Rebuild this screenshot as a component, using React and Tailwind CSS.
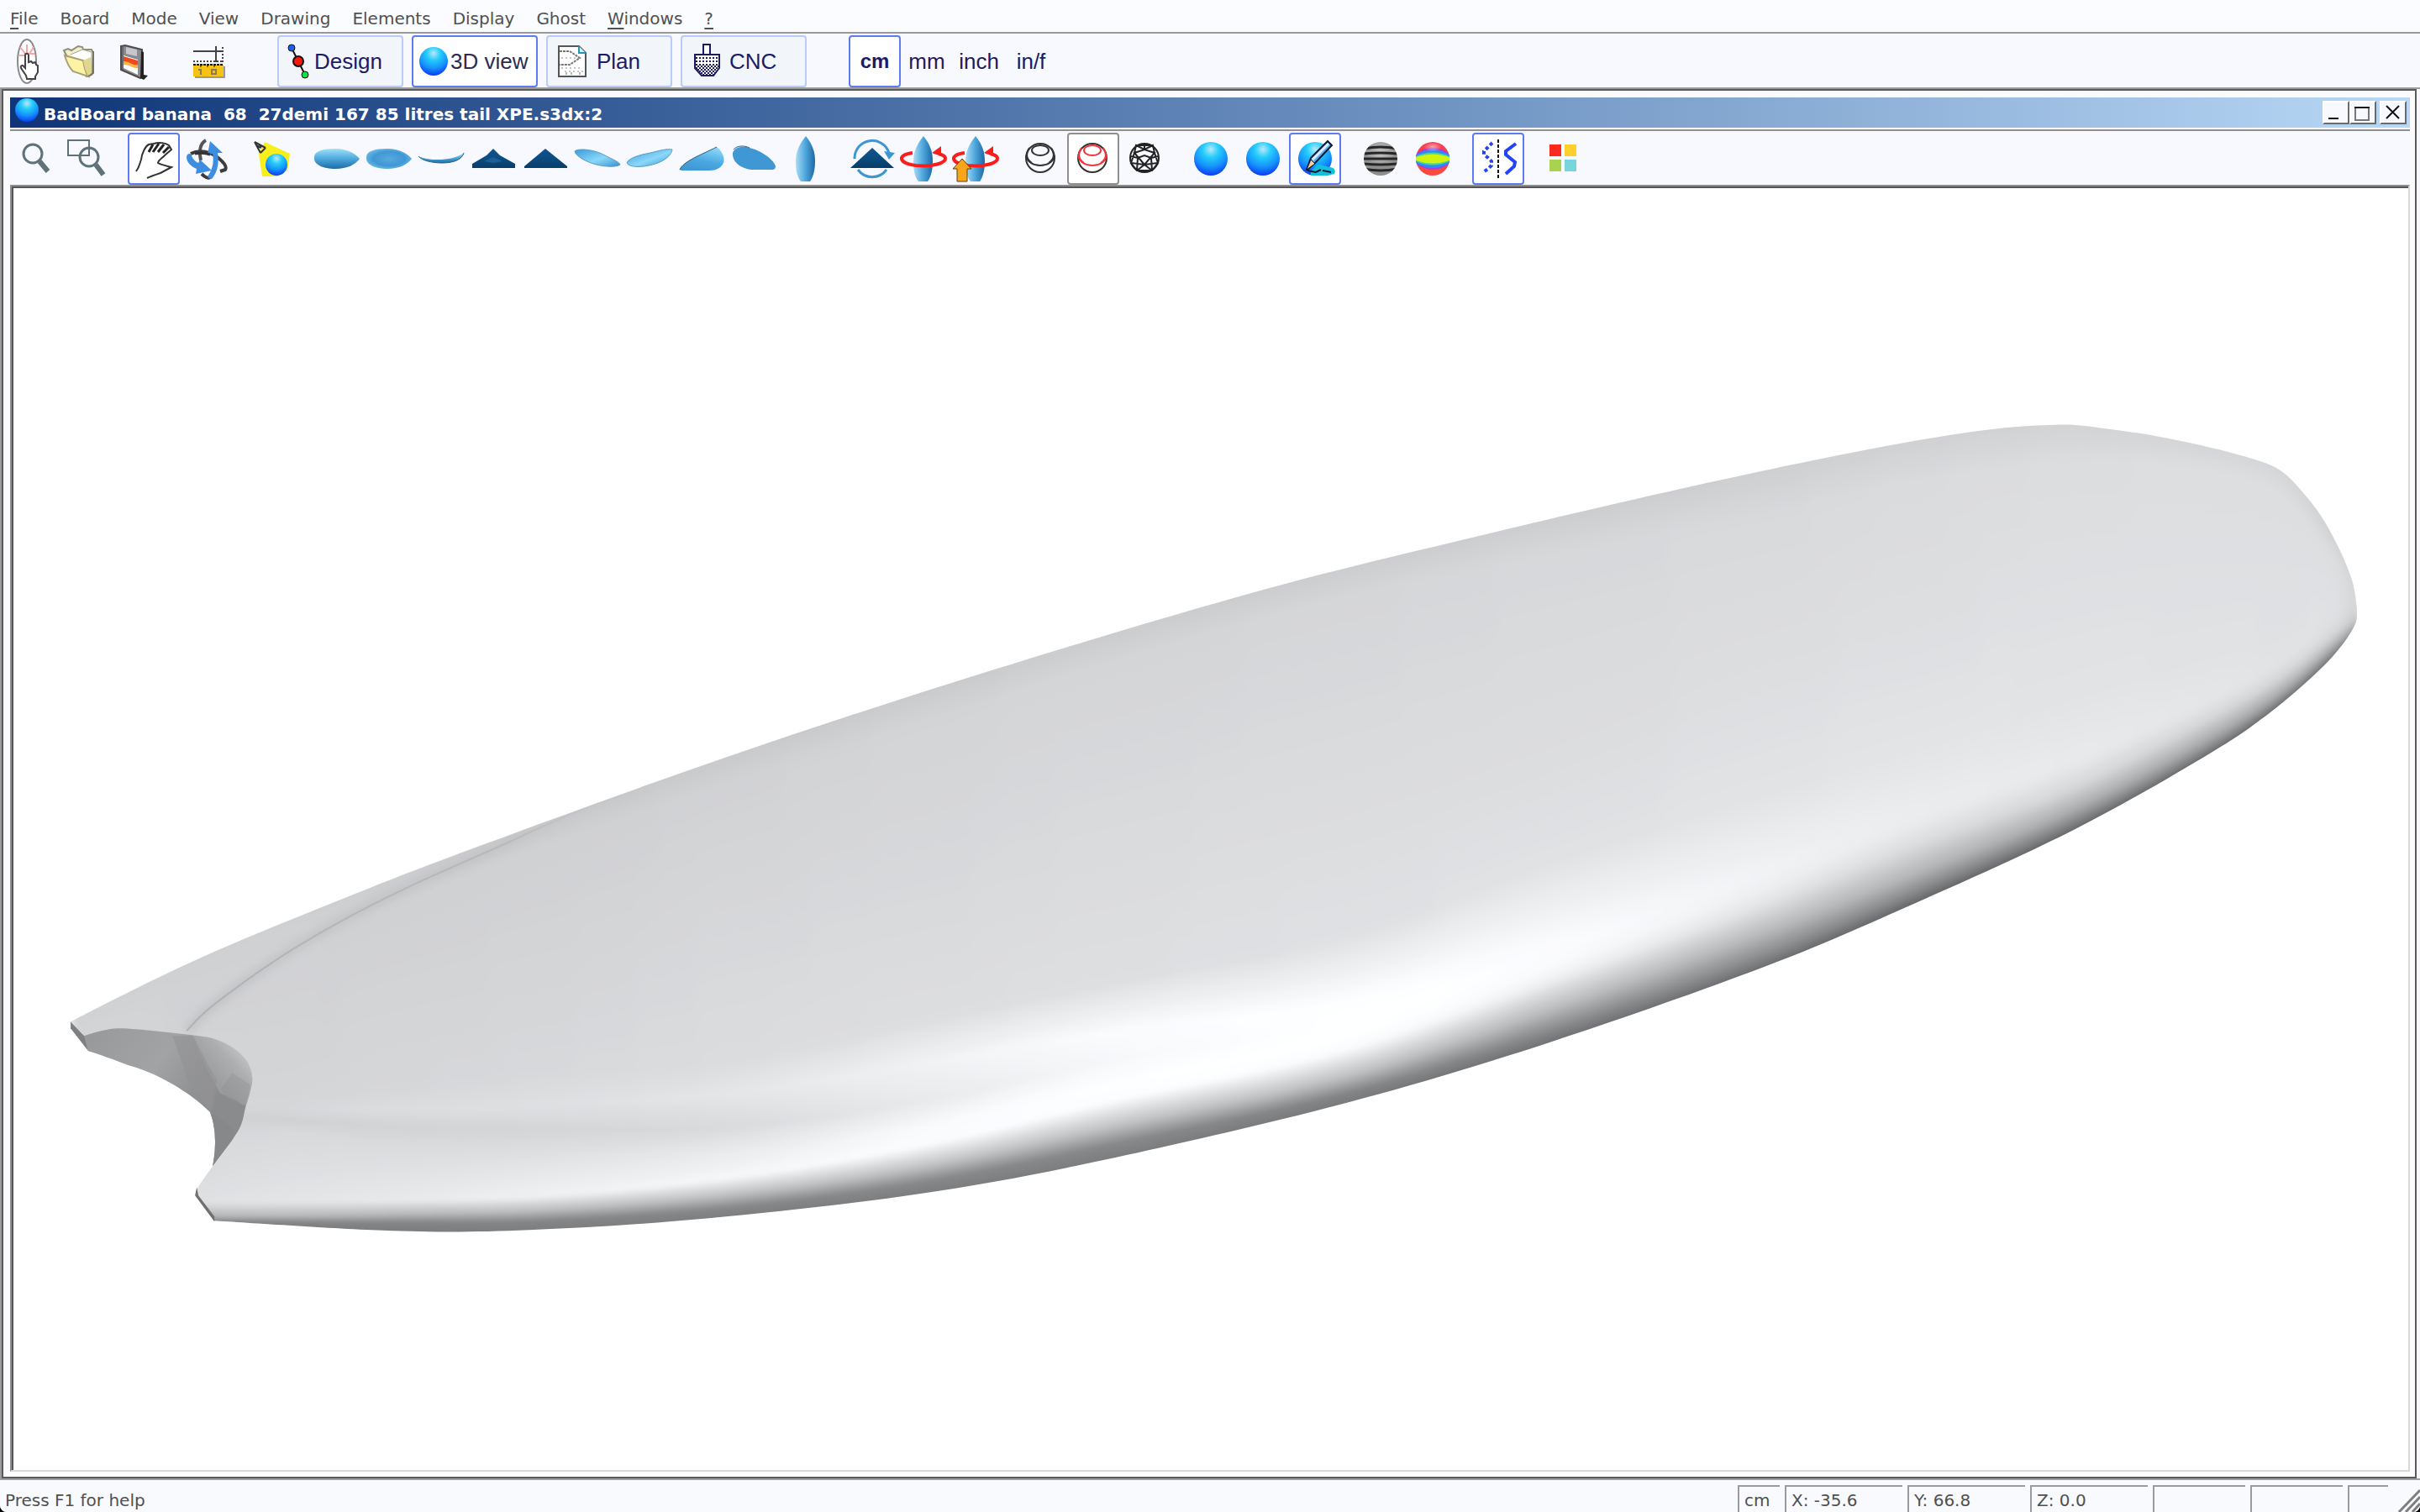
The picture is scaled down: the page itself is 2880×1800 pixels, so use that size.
import { useState } from "react";

const MENUS = [
  { label: "File", hot: true },
  { label: "Board" },
  { label: "Mode" },
  { label: "View" },
  { label: "Drawing" },
  { label: "Elements" },
  { label: "Display" },
  { label: "Ghost" },
  { label: "Windows", hot: true },
  { label: "?", hot: true },
];

const UNITS = ["cm", "mm", "inch", "in/f"];

/* ---------- small drawing helpers ---------- */

// Catmull-Rom through the points, returned as bezier commands
function smooth(pts) {
  let d = "";
  for (let i = 0; i < pts.length - 1; i++) {
    const p0 = pts[i - 1] || pts[i];
    const p1 = pts[i];
    const p2 = pts[i + 1];
    const p3 = pts[i + 2] || p2;
    d += `C${p1[0] + (p2[0] - p0[0]) / 6} ${p1[1] + (p2[1] - p0[1]) / 6} ${p2[0] - (p3[0] - p1[0]) / 6} ${p2[1] - (p3[1] - p1[1]) / 6} ${p2[0]} ${p2[1]}`;
  }
  return d;
}

function Defs() {
  return (
    <svg className="absolute w-0 h-0" aria-hidden="true">
      <defs>
        <radialGradient id="ball" cx="0.5" cy="0.22" r="0.8">
          <stop offset="0" stopColor="#b8e8fa" />
          <stop offset="0.3" stopColor="#25cdfb" />
          <stop offset="0.65" stopColor="#1592fb" />
          <stop offset="1" stopColor="#0a35f5" />
        </radialGradient>
        <linearGradient id="sky" x1="0" y1="0" x2="0" y2="1">
          <stop offset="0" stopColor="#9fe0fb" />
          <stop offset="0.5" stopColor="#4ea9dc" />
          <stop offset="1" stopColor="#1d6aa5" />
        </linearGradient>
        <linearGradient id="skyLight" x1="0" y1="0" x2="1" y2="1">
          <stop offset="0" stopColor="#3a9ad8" />
          <stop offset="0.55" stopColor="#8ad8fa" />
          <stop offset="1" stopColor="#3a90cc" />
        </linearGradient>
        <linearGradient id="wing" x1="0.8" y1="0" x2="0.4" y2="1">
          <stop offset="0" stopColor="#8fdcfb" />
          <stop offset="0.6" stopColor="#4aa8e0" />
          <stop offset="1" stopColor="#3f97d4" />
        </linearGradient>
        <radialGradient id="flat">
          <stop offset="0" stopColor="#58aae0" />
          <stop offset="0.7" stopColor="#3f97d4" />
          <stop offset="1" stopColor="#62b3e2" />
        </radialGradient>
        <linearGradient id="boardV">
          <stop offset="0" stopColor="#a9dcf7" />
          <stop offset="0.5" stopColor="#4ea6dc" />
          <stop offset="1" stopColor="#1c68a4" />
        </linearGradient>
        <linearGradient id="deep" x1="0" y1="0" x2="0" y2="1">
          <stop offset="0" stopColor="#10558d" />
          <stop offset="0.5" stopColor="#0c4c80" />
          <stop offset="1" stopColor="#083c68" />
        </linearGradient>
        <radialGradient id="shine" cx="0.5" cy="0.4" r="0.5">
          <stop offset="0" stopColor="#fff" stopOpacity="0.5" />
          <stop offset="1" stopColor="#fff" stopOpacity="0" />
        </radialGradient>
        <linearGradient id="rainbow" x1="0" y1="0" x2="0" y2="1">
          <stop offset="0" stopColor="#f53b52" />
          <stop offset="1" stopColor="#fb4a3e" />
        </linearGradient>
        <pattern id="dots" width="4" height="4" patternUnits="userSpaceOnUse">
          <rect width="2" height="2" fill="#1c1c5e" />
        </pattern>
        <pattern id="checks" width="4" height="4" patternUnits="userSpaceOnUse">
          <rect width="2" height="2" fill="#1c1c5e" />
          <rect x="2" y="2" width="2" height="2" fill="#1c1c5e" />
        </pattern>
        <clipPath id="ballClip">
          <circle cx="31" cy="31" r="20" />
        </clipPath>
      </defs>
    </svg>
  );
}

function Icon({ children }) {
  return (
    <svg viewBox="0 0 62 62" className="w-[62px] h-[62px] shrink-0" fill="none" aria-hidden="true">
      {children}
    </svg>
  );
}

/* ---------- main toolbar icons ---------- */

const NewIcon = () => (
  <Icon>
    <ellipse cx="30" cy="31" rx="11" ry="26" fill="#fff" stroke="#8b8b8b" strokeWidth="2" />
    <path d="M22 14l6 8M30 11v10M38 14l-5 8M21 24h6M39 22h-5" stroke="#f5a6a6" strokeWidth="2" />
    <path d="M28 24c0-3 4-3 4 0v8l3-1 2 2 3-1 1 3 2 1v8l-3 5v3H30l-1-4-6-9c-1-3 2-4 3-2l2 2z" fill="#fff" stroke="#444" strokeWidth="2" />
  </Icon>
);

const OpenIcon = () => (
  <Icon>
    <path d="M15 24l-3-6 5-2 4 2 8-5 5 1 1 3 10 0 2 4-2 26-6 2z" fill="#f3eecb" stroke="#8f8e7c" strokeWidth="2" />
    <path d="M20 23l14-6 11 3v22" fill="#fff" stroke="#a3a290" strokeWidth="1" />
    <path d="M13 24l22 6c1 7 3 14 6 19l-18-6c-5-5-8-12-10-19z" fill="#fdf3a4" stroke="#a8a174" strokeWidth="2" />
    <path d="M35 30l9-4 1 19-4 4c-3-6-5-12-6-19z" fill="#e0d68c" />
    <path d="M41 49l6-4V19" stroke="#77755f" strokeWidth="2" />
  </Icon>
);

const SaveIcon = () => (
  <Icon>
    <path d="M18 13l5-1 20 5 1 30-3 4-23-10z" fill="#8a8a8e" stroke="#4c4c4e" strokeWidth="2" />
    <path d="M42 19l3 1v27l5 1-5 5-4-2z" fill="#222" />
    <path d="M24 14l13 3v8l-13-3z" fill="#c6c6cc" />
    <path d="M21 24l17 5v18l-17-8z" fill="#fff" />
    <path d="M21 25l17 5v7c-6 2-10-5-17-4z" fill="#ee4a1a" />
    <path d="M21 31c7-1 11 6 17 4v4c-6 1-10-5-17-4z" fill="#ffb347" />
    <path d="M20 14v27" stroke="#4c4c4e" strokeWidth="1" />
  </Icon>
);

const RulerIcon = () => (
  <Icon>
    <path d="M12 19h36M39 13v19" stroke="#444" strokeWidth="2" />
    <path d="M12 31h36M47 14v18" stroke="#444" strokeWidth="2" strokeDasharray="2 2" />
    <rect x="14" y="37" width="36" height="14" fill="#9a9a9a" />
    <rect x="12" y="35" width="36" height="14" fill="#f6c315" />
    <path d="M12 35h36" stroke="#111" strokeWidth="2" strokeDasharray="3 1" />
    <path d="M18 41h3v6M34 41h5v5h-5z" stroke="#8b7b52" strokeWidth="2" />
    <path d="M21 35v3M29 35v3M37 35v3" stroke="#111" strokeWidth="1" />
  </Icon>
);

const DesignIcon = () => (
  <svg viewBox="0 0 42 58" className="w-[42px] h-[58px]" aria-hidden="true">
    <path d="M15 13l8 16 8 16" stroke="#111" strokeWidth="2" fill="none" />
    <circle cx="15" cy="13" r="4" fill="#1d5ff0" stroke="#111" strokeWidth="1" />
    <circle cx="23" cy="29" r="6" fill="#f51b0c" stroke="#111" strokeWidth="2" />
    <circle cx="31" cy="45" r="4" fill="#14e046" stroke="#111" strokeWidth="1" />
  </svg>
);

const View3dIcon = () => (
  <svg viewBox="0 0 44 58" className="w-11 h-[58px]" aria-hidden="true">
    <circle cx="24" cy="29" r="17" fill="url(#ball)" />
  </svg>
);

const PlanIcon = () => (
  <svg viewBox="0 0 58 58" className="w-[58px] h-[58px]" fill="none" aria-hidden="true">
    <path d="M13 11h24l8 8v28H13z" fill="#fff" stroke="#555" strokeWidth="2" />
    <path d="M37 11v8h8" fill="#d5f6fc" stroke="#2595b5" strokeWidth="2" />
    <path d="M14 17h12l12 8-12 8H14" stroke="#777" strokeWidth="2" strokeDasharray="3 1" />
    <path d="M16 25h22M16 37h24M20 41h22" stroke="#888" strokeWidth="1" strokeDasharray="2 3" />
    <path d="M22 42v3M28 42v3M38 42v3" stroke="#777" strokeWidth="1" />
  </svg>
);

const CncIcon = () => (
  <svg viewBox="0 0 56 58" className="w-14 h-[58px]" fill="none" aria-hidden="true">
    <path d="M25 20V9h8v11" fill="#fff" stroke="#1c1c5e" strokeWidth="2" />
    <path d="M15 21h29v16l-7 9H23l-8-9z" fill="#fff" />
    <path d="M15 21h29v13H15z" fill="url(#dots)" />
    <path d="M15 34h29v4l-7 8H23l-8-8z" fill="url(#checks)" />
    <path d="M15 21h29v16l-7 9H23l-8-9z" stroke="#1c1c5e" strokeWidth="2" />
  </svg>
);

/* ---------- 3D view toolbar icons ---------- */

const MagnifyIcon = () => (
  <Icon>
    <circle cx="27" cy="25" r="11" stroke="#5e7278" strokeWidth="3" />
    <path d="M35 34l10 12" stroke="#5e7278" strokeWidth="6" />
  </Icon>
);

const ZoomBoxIcon = () => (
  <Icon>
    <rect x="7" y="9" width="25" height="18" stroke="#5e7278" strokeWidth="2" />
    <circle cx="32" cy="29" r="11" stroke="#5e7278" strokeWidth="3" />
    <path d="M40 38l9 12" stroke="#5e7278" strokeWidth="6" />
  </Icon>
);

const HandIcon = () => (
  <Icon>
    <path
      d="M10 46c4-5 4-9 6-14 1-8 5-16 9-18l6-1c6-2 14-1 18 2l3 5-8 7c-4 4-8 6-8 9 3 2 8 3 16 5l-13 7c-6 2-12 4-16 6"
      stroke="#333"
      strokeWidth="2"
    />
    <path d="M30 14l-5 9M37 13l-7 10M43 14l-7 9M49 17l-7 7" stroke="#222" strokeWidth="3" />
  </Icon>
);

const OrbitIcon = () => (
  <Icon>
    <path d="M31 9c-8 4-8 16-6 24" stroke="#555" strokeWidth="4" />
    <path d="M13 25c10-5 24-3 34 6 7 6 9 10 7 13l-6 2" stroke="#3c3c3c" strokeWidth="4" />
    <path d="M26 49c4 4 8 6 10 4" stroke="#3c3c3c" strokeWidth="4" />
    <path d="M8 29c0-4 4-5 6-3 0 4 4 8 8 10l2-4 14 13-19 4 1-6c-7-3-12-8-12-14z" fill="#3f8de0" />
    <path d="M36 10l15 14h-6c2 12 0 23-7 31-3 0-4-1-5-3 6-8 8-18 6-27l-6 1z" fill="#3f8de0" />
    <path d="M18 25c6-1 12-1 18 1" stroke="#333" strokeWidth="3" />
  </Icon>
);

const LightIcon = () => (
  <Icon>
    <path d="M23 11l30 14-3 20-12 7H20l-4-27z" fill="#f8ef1a" />
    <path d="M11 11l7 13M11 11l13 7M13 15l6 3M15 18l5-3M18 24l6-6" stroke="#333" strokeWidth="2" />
    <circle cx="37" cy="38" r="13" fill="url(#ball)" />
  </Icon>
);

const shapes = {
  top: <path d="M4 29c0-7 10-10 25-10 14 0 24 6 29 12-5 7-15 12-29 12S4 38 4 31z" fill="url(#sky)" />,
  bottom: <path d="M4 29c0-7 10-10 25-10 14 0 24 6 29 12-5 7-15 12-29 12S4 38 4 31z" fill="url(#flat)" />,
  profile: (
    <g>
      <path d="M4 28c14 6 40 6 54-4-2 7-10 12-26 12C20 36 8 33 4 28z" fill="url(#sky)" />
      <path d="M4 28c4 5 16 8 28 8 16 0 24-5 26-12" stroke="#2b5a80" strokeWidth="1" />
    </g>
  ),
  front: (
    <g>
      <path d="M6 37l17-10 8-8 8 8 18 10v5H6z" fill="url(#deep)" />
      <path d="M20 34l11-5 11 5-11 2z" fill="#1a5f97" />
    </g>
  ),
  back: <path d="M6 40l25-21 26 21v2H6z" fill="url(#deep)" />,
  tiltL: (
    <path d="M4 22c4-4 24-2 36 5 12 6 18 9 18 11-4 3-16 3-28 0S5 28 4 22z" fill="url(#skyLight)" stroke="#5a9cc4" />
  ),
  tiltR: (
    <path d="M58 20c-1 8-12 16-28 19-14 3-24 1-26-3 2-6 16-10 28-12 12-3 18-5 26-4z" fill="url(#skyLight)" stroke="#5a9cc4" />
  ),
  wing: (
    <g>
      <path d="M5 44c4-10 26-18 44-27 7 5 10 14 8 19-3 6-9 9-16 9H7z" fill="url(#wing)" />
      <path d="M5 44c4-10 26-18 44-27" stroke="#2d5d80" strokeWidth="1" />
    </g>
  ),
  leaf: (
    <g>
      <path d="M6 24c2-7 12-9 20-6 14 3 30 15 31 22 0 3-2 4-4 4H31C18 44 5 36 6 24z" fill="#3f97d4" />
      <path d="M7 20c4-5 13-5 19-2" stroke="#2d5d80" strokeWidth="1" />
    </g>
  ),
  stand: <path d="M31 4c8 10 11 19 11 30 0 12-3 20-6 24H25c-4-5-6-12-6-24 0-11 4-20 12-30z" fill="url(#boardV)" />,
};

const SpinFrontIcon = () => (
  <Icon>
    <path d="M11 31a21 21 0 0 1 41-7" stroke="#3d96d2" strokeWidth="3" />
    <path d="M46 22l13 2-7 8z" fill="#3d96d2" />
    <path d="M15 44a21 21 0 0 0 34 0" stroke="#3d96d2" strokeWidth="3" />
    <path d="M6 42l26-24 26 24z" fill="url(#deep)" />
  </Icon>
);

function SpinIcon({ arrow }) {
  return (
    <Icon>
      {shapes.stand}
      <path d="M18 24C0 26 0 36 22 39c20 2 36-3 35-9-1-3-4-4-8-5" stroke="#fb1d1a" strokeWidth="4" />
      <path d="M41 24l11-8v12z" fill="#fb1d1a" />
      {arrow && <path d="M15 31l11 12h-5v15H9V43H4z" fill="#f9a51b" stroke="#5b4110" strokeWidth="1" />}
    </Icon>
  );
}

function RingsIcon({ color }) {
  return (
    <Icon>
      <circle cx="30" cy="30" r="17" stroke="#333" strokeWidth="2" />
      <ellipse cx="30" cy="21" rx="10" ry="6" stroke={color} strokeWidth="2" />
      <path d="M13 27c2 16 32 16 34 0M17 18c-5 8-3 14 3 18M43 18c5 8 3 14-3 18" stroke={color} strokeWidth="2" />
    </Icon>
  );
}

const MeshIcon = () => (
  <Icon>
    <circle cx="30" cy="30" r="17" stroke="#222" strokeWidth="2" />
    <path
      d="M30 38L18 24l12-4 12 4zM18 24l-4 12 16 2 16-2-4-12M30 38l-9 7M30 38l9 7M18 24l2-9 10 5 10-5 2 9M20 15h20M14 36l7 9h18l7-9M13 28l9 2 8-3 8 3 9-2M22 30l-1 15M38 30l1 15M30 20v-7"
      stroke="#222"
      strokeWidth="2"
    />
  </Icon>
);

const BallIcon = () => (
  <Icon>
    <circle cx="31" cy="31" r="20" fill="url(#ball)" />
  </Icon>
);

const PaintIcon = () => (
  <Icon>
    <circle cx="31" cy="31" r="20" fill="url(#ball)" />
    <path d="M26 46l8-8c6 0 10 2 14 3 6 0 8 4 6 8l-8 2H26z" fill="#12bfdc" />
    <path d="M21 44l5-14 20-20 5 5-20 21-9 8z" fill="#5db2f2" stroke="#0d1833" strokeWidth="2" />
    <path d="M27 31L46 12l2 2-19 19z" fill="#d9f0ff" />
    <path d="M21 44l5-12 5 5z" fill="#fbcf9c" stroke="#0d1833" strokeWidth="1" />
    <path d="M22 45l10 2 6-3M40 45l10 2" stroke="#0d1833" strokeWidth="2" />
  </Icon>
);

const ZebraIcon = () => (
  <Icon>
    <g clipPath="url(#ballClip)">
      <rect x="11" y="11" width="40" height="40" fill="#8f8f8f" />
      <circle cx="31" cy="27" r="18" fill="url(#shine)" />
      <path d="M11 19q20-4 40 0M11 25q20-2 40 0M11 31h40M11 37q20 2 40 0M11 43q20 4 40 0" stroke="#262626" strokeWidth="3" />
    </g>
  </Icon>
);

const RainbowIcon = () => (
  <Icon>
    <g clipPath="url(#ballClip)">
      <rect x="11" y="11" width="40" height="40" fill="url(#rainbow)" />
      <path d="M11 25q20-14 40 0v12q-20 14-40 0z" fill="#a43ce0" />
      <path d="M11 26q20-12 40 0v10q-20 12-40 0z" fill="#2f8af2" />
      <path d="M11 28q20-9 40 0v6q-20 9-40 0z" fill="#46d69a" />
      <path d="M11 29q20-7 40 0v4q-20 7-40 0z" fill="#d2f30e" />
    </g>
    <ellipse cx="31" cy="18" rx="11" ry="6" fill="url(#shine)" />
  </Icon>
);

const SymmetryIcon = () => (
  <Icon>
    <path d="M24 12l-5 5-5 5v4l5 4 4 4v5l-4 4-6 4" stroke="#2343f5" strokeWidth="4" strokeDasharray="4 3" />
    <path d="M31 8v46" stroke="#111" strokeWidth="2" strokeDasharray="4 2" />
    <path d="M52 13l-12 9v4l11 9-1 5-10 9" stroke="#2343f5" strokeWidth="4" />
  </Icon>
);

const ColorsIcon = () => (
  <Icon>
    <rect x="14" y="14" width="14" height="14" fill="#fb2a1d" />
    <rect x="32" y="14" width="14" height="14" fill="#ffcf2c" />
    <rect x="14" y="32" width="14" height="14" fill="#a9d24e" />
    <rect x="32" y="32" width="14" height="14" fill="#76d6dc" />
  </Icon>
);

const VIEW_TOOLS = [
  [
    { name: "Zoom", icon: <MagnifyIcon /> },
    { name: "Zoom window", icon: <ZoomBoxIcon /> },
  ],
  [
    { name: "Pan", icon: <HandIcon />, frame: "blue" },
    { name: "Rotate", icon: <OrbitIcon /> },
  ],
  [{ name: "Light", icon: <LightIcon /> }],
  [
    { name: "Top view", icon: <Icon>{shapes.top}</Icon> },
    { name: "Bottom view", icon: <Icon>{shapes.bottom}</Icon> },
    { name: "Side view", icon: <Icon>{shapes.profile}</Icon> },
    { name: "Front view", icon: <Icon>{shapes.front}</Icon> },
    { name: "Back view", icon: <Icon>{shapes.back}</Icon> },
    { name: "Tilt left", icon: <Icon>{shapes.tiltL}</Icon> },
    { name: "Tilt right", icon: <Icon>{shapes.tiltR}</Icon> },
    { name: "Tail perspective", icon: <Icon>{shapes.wing}</Icon> },
    { name: "Nose perspective", icon: <Icon>{shapes.leaf}</Icon> },
    { name: "Upright", icon: <Icon>{shapes.stand}</Icon> },
  ],
  [
    { name: "Spin front", icon: <SpinFrontIcon /> },
    { name: "Spin", icon: <SpinIcon /> },
    { name: "Spin and lift", icon: <SpinIcon arrow /> },
  ],
  [
    { name: "Slices", icon: <RingsIcon color="#333" /> },
    { name: "Colored slices", icon: <RingsIcon color="#f5333a" />, frame: "gray" },
    { name: "Mesh", icon: <MeshIcon /> },
  ],
  [
    { name: "Smooth", icon: <BallIcon /> },
    { name: "Shaded", icon: <BallIcon /> },
    { name: "Painted", icon: <PaintIcon />, frame: "blue" },
  ],
  [
    { name: "Zebra", icon: <ZebraIcon /> },
    { name: "Curvature", icon: <RainbowIcon /> },
  ],
  [{ name: "Symmetry", icon: <SymmetryIcon />, frame: "blue" }],
  [{ name: "Colors", icon: <ColorsIcon /> }],
];

/* ---------- the board ---------- */

const TOP_EDGE = [
  [84, 1215], [153, 1180], [257, 1131], [400, 1072], [557, 1011], [865, 900], [1180, 797], [1500, 702], [1760, 637],
  [2013, 578], [2218, 535], [2355, 512], [2445, 505], [2500, 509], [2567, 519], [2633, 533], [2687, 548], [2713, 560],
  [2733, 579], [2760, 613], [2783, 655], [2798, 693], [2803, 723],
];
const BOTTOM_EDGE = [
  [2803, 723], [2801, 742], [2783, 770], [2753, 802], [2700, 847], [2628, 896], [2466, 987], [2269, 1078], [2098, 1150],
  [1842, 1240], [1600, 1312], [1316, 1379], [1093, 1420], [843, 1449], [629, 1463], [468, 1464], [255, 1452],
];
const TAIL_EDGE = [
  [233, 1420], [237, 1410], [253, 1387], [277, 1355], [287, 1337], [292, 1317], [298, 1297], [300, 1280], [293, 1261],
  [277, 1246], [253, 1235], [220, 1230], [183, 1226], [143, 1223], [120, 1226], [100, 1232],
];

const OUTLINE = `M84 1215${smooth(TOP_EDGE)}${smooth(BOTTOM_EDGE)}L233 1420${smooth(TAIL_EDGE)}Z`;

// Grey profile from rail to rail at a few stations: x, then y and grey pairs
const STATIONS = [
  [84, [1200, 207], [1220, 210], [1240, 212], [1260, 212], [1290, 212], [1310, 212], [1400, 212], [1430, 220], [1444, 180], [1449, 135], [1453, 124]],
  [300, [1113, 207], [1145, 209], [1270, 211], [1300, 212], [1316, 213], [1330, 208], [1345, 215], [1430, 226], [1447, 180], [1453, 132], [1459, 124]],
  [470, [1045, 205], [1080, 208], [1230, 212], [1295, 214], [1320, 220], [1340, 210], [1362, 218], [1428, 232], [1445, 180], [1454, 132], [1464, 124]],
  [645, [980, 202], [1010, 208], [1200, 213], [1280, 216], [1315, 223], [1344, 212], [1370, 222], [1422, 240], [1440, 185], [1452, 132], [1464, 124]],
  [870, [898, 201], [930, 209], [1150, 216], [1260, 219], [1300, 229], [1340, 218], [1370, 234], [1400, 246], [1420, 192], [1436, 134], [1448, 124]],
  [1093, [825, 202], [860, 211], [1100, 217], [1215, 221], [1265, 241], [1310, 232], [1340, 248], [1362, 251], [1388, 192], [1406, 135], [1420, 124]],
  [1316, [755, 203], [790, 212], [1050, 219], [1170, 222], [1228, 250], [1262, 246], [1290, 253], [1310, 252], [1341, 192], [1362, 135], [1379, 124]],
  [1600, [672, 203], [710, 213], [980, 220], [1115, 224], [1190, 253], [1212, 254], [1232, 254], [1248, 250], [1280, 190], [1300, 132], [1312, 120]],
  [1842, [616, 204], [660, 215], [900, 220], [1028, 225], [1112, 248], [1130, 251], [1150, 249], [1165, 240], [1200, 188], [1226, 135], [1240, 112]],
  [2098, [560, 206], [610, 216], [800, 221], [945, 226], [1030, 241], [1042, 241], [1056, 238], [1076, 225], [1108, 185], [1135, 138], [1151, 106]],
  [2269, [525, 208], [575, 218], [760, 222], [895, 227], [963, 235], [975, 235], [985, 232], [1007, 220], [1042, 180], [1064, 135], [1078, 100]],
  [2466, [505, 210], [550, 220], [700, 223], [830, 226], [895, 232], [903, 232], [912, 229], [935, 215], [962, 172], [978, 128], [988, 98]],
  [2628, [532, 212], [560, 221], [680, 223], [780, 225], [822, 228], [830, 228], [838, 225], [853, 214], [876, 172], [889, 130], [897, 98]],
  [2713, [562, 212], [590, 221], [680, 223], [755, 224], [780, 225], [786, 225], [792, 222], [803, 213], [822, 170], [831, 130], [838, 98]],
  [2782, [655, 208], [672, 219], [695, 221], [715, 222], [726, 221], [732, 220], [740, 217], [750, 207], [760, 175], [767, 140], [773, 108]],
  [2806, [700, 204], [710, 206], [715, 206], [720, 206], [723, 204], [727, 200], [732, 194], [736, 184], [740, 160], [744, 135], [748, 110]],
];

const SLICE = 4;

function buildSlices() {
  const slices = [];
  for (let x = 84; x < 2806; x += SLICE) {
    let i = 0;
    while (i < STATIONS.length - 2 && STATIONS[i + 1][0] <= x) i++;
    const a = STATIONS[i];
    const b = STATIONS[i + 1];
    const p = STATIONS[i - 1] || a;
    const n = STATIONS[i + 2] || b;
    const w = b[0] - a[0];
    const t = (x - a[0]) / w;
    const stops = a.slice(1).map((_, k) =>
      [0, 1].map((c) => {
        // cubic hermite keeps the shading lines smooth across stations
        const va = a[k + 1][c];
        const vb = b[k + 1][c];
        const ma = p === a ? vb - va : ((vb - p[k + 1][c]) / (b[0] - p[0])) * w;
        const mb = n === b ? vb - va : ((n[k + 1][c] - va) / (n[0] - a[0])) * w;
        const t2 = t * t;
        const t3 = t2 * t;
        return (2 * t3 - 3 * t2 + 1) * va + (t3 - 2 * t2 + t) * ma + (3 * t2 - 2 * t3) * vb + (t3 - t2) * mb;
      })
    );
    slices.push({ x, stops });
  }
  return slices;
}

const SLICES = buildSlices();

const RIDGE = [[222, 1226], [253, 1196], [334, 1138], [414, 1091], [494, 1051], [593, 1007], [682, 967], [780, 932]];

function Board() {
  return (
    <svg viewBox="16 224 2848 1524" className="block w-full h-full" role="img" aria-label="Board 3D view">
      <defs>
        <clipPath id="outline">
          <path d={OUTLINE} />
        </clipPath>
        <filter id="soften" x="-5%" y="-5%" width="110%" height="110%">
          <feGaussianBlur stdDeviation="6 2" />
        </filter>
        <filter id="soft" x="-5%" y="-5%" width="110%" height="110%">
          <feGaussianBlur stdDeviation="5" />
        </filter>
        <linearGradient id="ridge" gradientUnits="userSpaceOnUse" x1="222" y1="1226" x2="780" y2="932">
          <stop offset="0" stopColor="#b0b1b3" />
          <stop offset="0.7" stopColor="#b8b9bb" />
          <stop offset="1" stopColor="#c6c7c9" stopOpacity="0" />
        </linearGradient>
        <linearGradient id="notch" gradientUnits="userSpaceOnUse" x1="110" y1="1220" x2="290" y2="1350">
          <stop offset="0" stopColor="#98999b" />
          <stop offset="0.4" stopColor="#a2a3a5" />
          <stop offset="0.65" stopColor="#909193" />
          <stop offset="1" stopColor="#868789" />
        </linearGradient>
        <linearGradient id="notchLip" gradientUnits="userSpaceOnUse" x1="300" y1="1245" x2="255" y2="1285">
          <stop offset="0" stopColor="#d0d1d3" />
          <stop offset="0.5" stopColor="#adaeb0" />
          <stop offset="1" stopColor="#9c9d9f" />
        </linearGradient>
        {SLICES.map(({ x, stops }) => {
          const y1 = stops[0][0];
          const y2 = stops[stops.length - 1][0];
          return (
            <linearGradient key={x} id={`s${x}`} gradientUnits="userSpaceOnUse" x1="0" x2="0" y1={y1} y2={y2}>
              {stops.map(([y, g], k) => {
                const v = Math.min(255, Math.round(g));
                return <stop key={k} offset={(y - y1) / (y2 - y1)} stopColor={`rgb(${v},${Math.min(255, v + 1)},${Math.min(255, v + 3)})`} />;
              })}
            </linearGradient>
          );
        })}
      </defs>

      {/* inside of the swallow tail */}
      <path d="M98 1230L143 1215H250L305 1270L300 1320L277 1355L253 1387Q260 1350 250 1323C222 1295 180 1274 153 1267C135 1260 118 1254 105 1250Z" fill="url(#notch)" />
      <path d="M228 1230C255 1234 275 1240 290 1255L304 1280L292 1317L283 1310L262 1300L244 1268Z" fill="url(#notchLip)" />
      <path d="M230 1232L248 1268L258 1284L250 1322L226 1290L205 1232Z" fill="#929395" opacity="0.6" />
      <path d="M276 1276L298 1290L292 1317L274 1310L262 1296Z" fill="#8f9092" opacity="0.4" />
      <path d="M258 1298L275 1310L292 1315L287 1337L277 1355L252 1328Z" fill="#8a8b8d" />
      <path d="M250 1323L278 1342L277 1355L253 1387Q260 1350 250 1323Z" fill="#87888a" />

      <g clipPath="url(#outline)">
        <g filter="url(#soften)">
          {SLICES.map(({ x }) => (
            <rect key={x} x={x} y="450" width={SLICE + 1} height="1050" fill={`url(#s${x})`} />
          ))}
        </g>
        <path d={`M222 1226${smooth(RIDGE)}`} fill="none" stroke="url(#ridge)" strokeWidth="12" opacity="0.4" filter="url(#soft)" />
        <path d={`M222 1226${smooth(RIDGE)}`} fill="none" stroke="url(#ridge)" strokeWidth="2" />
      </g>

      {/* cut tips of the tail */}
      <path d="M84 1215L84 1223L105 1250L100 1232Z" fill="#7f8082" />
      <path d="M234 1412L232 1422L255 1453L255 1447L236 1422Z" fill="#6f7072" />
    </svg>
  );
}

/* ---------- controls ---------- */

function ToolButton({ name, icon, frame }) {
  return (
    <button
      type="button"
      aria-label={name}
      className={`w-[62px] h-[62px] flex items-center justify-center rounded-sm border-2 ${
        frame === "blue"
          ? "bg-white border-[#5f7bf0]"
          : frame === "gray"
            ? "bg-white border-[#8f8f8f]"
            : "border-transparent"
      }`}
    >
      {icon}
    </button>
  );
}

function ModeButton({ label, icon, active, onClick }) {
  return (
    <button
      type="button"
      onClick={onClick}
      className={`w-[150px] h-[62px] flex items-center rounded-sm border-2 text-[26px] leading-8 ${
        active ? "bg-white border-[#5f7bf0] text-[#2c2c50]" : "bg-[#f2f5fa] border-[#bccaf8] text-[#1b1b66]"
      }`}
    >
      {icon}
      <span className="whitespace-nowrap">{label}</span>
    </button>
  );
}

function StatusPanel({ children, width }) {
  return <div className={`h-8 border-t-2 border-l-2 border-[#9a9aa0] pl-1.5 pt-1 ${width}`}>{children}</div>;
}

const captionButton =
  "w-8 h-7 bg-[#f8f9fc] border-2 border-t-white border-l-white border-r-[#6b6b6b] border-b-[#6b6b6b] flex items-center justify-center";

function App() {
  const [mode, setMode] = useState("3D view");
  const [unit, setUnit] = useState("cm");

  const modes = [
    { label: "Design", icon: <DesignIcon /> },
    { label: "3D view", icon: <View3dIcon /> },
    { label: "Plan", icon: <PlanIcon /> },
    { label: "CNC", icon: <CncIcon /> },
  ];

  return (
    <div className="bg-black">
      <Defs />
      <div className="h-screen flex flex-col bg-[#f7f9fe] rounded-b-lg overflow-hidden font-['DejaVu_Sans',sans-serif] text-xl leading-6 text-[#505050]">
        {/* Menu bar */}
        <nav className="h-10 shrink-0 flex items-center gap-[26px] pl-3 pt-1.5 bg-[#fafcff] border-b-2 border-[#999999]">
          {MENUS.map((m) => (
            <button key={m.label} type="button">
              {m.hot ? (
                <>
                  <span className="underline decoration-2 underline-offset-4">{m.label[0]}</span>
                  {m.label.slice(1)}
                </>
              ) : (
                m.label
              )}
            </button>
          ))}
        </nav>

        {/* Main toolbar */}
        <div className="h-16 shrink-0 flex items-end pl-0.5 font-['Liberation_Sans',sans-serif]">
          <ToolButton name="New" icon={<NewIcon />} />
          <ToolButton name="Open" icon={<OpenIcon />} />
          <ToolButton name="Save" icon={<SaveIcon />} />
          <div className="ml-[30px]">
            <ToolButton name="Measure" icon={<RulerIcon />} />
          </div>
          <div className="flex gap-2.5 ml-[50px]">
            {modes.map((m) => (
              <ModeButton key={m.label} {...m} active={mode === m.label} onClick={() => setMode(m.label)} />
            ))}
          </div>
          <div className="flex ml-[50px] text-[26px] leading-8 text-[#1b1b66]">
            {UNITS.map((u) => (
              <button
                key={u}
                type="button"
                onClick={() => setUnit(u)}
                className={`w-[62px] h-[62px] rounded-sm border-2 ${
                  unit === u ? "bg-white border-[#5f7bf0] font-bold text-2xl" : "border-transparent"
                }`}
              >
                {u}
              </button>
            ))}
          </div>
        </div>

        {/* Document window */}
        <div className="grow min-h-0 border-t-2 border-l-2 border-b-2 border-[#9c9c9c] pr-1">
          <div className="h-full flex flex-col border-2 border-[#5a5a5a] bg-[#fbfbfd] pt-2 pl-2 pr-1.5 pb-1.5">
            <header className="h-9 shrink-0 flex items-center bg-linear-to-r from-[#0f3578] to-[#b8d8f5] pr-1">
              <svg viewBox="0 0 40 36" className="w-10 h-9 shrink-0" aria-hidden="true">
                <circle cx="20" cy="15" r="14" fill="url(#ball)" />
              </svg>
              <h1 className="grow whitespace-pre text-white text-xl leading-6 font-bold pt-1">
                BadBoard banana  68  27demi 167 85 litres tail XPE.s3dx:2
              </h1>
              <button type="button" aria-label="Minimize" className={captionButton}>
                <svg viewBox="0 0 28 24" className="w-7 h-6">
                  <path d="M5 19h12" stroke="#111" strokeWidth="2" />
                </svg>
              </button>
              <button type="button" aria-label="Maximize" className={captionButton}>
                <svg viewBox="0 0 28 24" className="w-7 h-6" fill="none">
                  <path d="M5 6v15h16V6" stroke="#777" strokeWidth="2" />
                  <path d="M4 6h18" stroke="#111" strokeWidth="2" />
                </svg>
              </button>
              <button type="button" aria-label="Close" className={`${captionButton} ml-1`}>
                <svg viewBox="0 0 28 24" className="w-7 h-6">
                  <path d="M6 4l15 15M21 4L6 19" stroke="#111" strokeWidth="2" />
                </svg>
              </button>
            </header>

            <div className="h-[66px] mt-0.5 shrink-0 flex items-start gap-4 border-t-2 border-[#8f8f8f] bg-[#f7f9fe] pt-0.5">
              {VIEW_TOOLS.map((group, i) => (
                <div key={i} className="flex">
                  {group.map((tool) => (
                    <ToolButton key={tool.name} {...tool} />
                  ))}
                </div>
              ))}
            </div>

            <main className="grow min-h-0 border-2 border-t-[#8d8d8d] border-l-[#8d8d8d] border-r-[#d8d8d8] border-b-[#d8d8d8]">
              <div className="h-full border-t-2 border-l-2 border-[#555555] bg-white">
                <Board />
              </div>
            </main>
          </div>
        </div>

        {/* Status bar */}
        <footer className="h-[38px] shrink-0 flex items-end bg-[#f9fafe]">
          <p className="grow pl-1.5 pb-0.5">Press F1 for help</p>
          <div className="flex gap-1.5 whitespace-nowrap">
            <StatusPanel width="w-[50px]">cm</StatusPanel>
            <StatusPanel width="w-[140px]">X: -35.6</StatusPanel>
            <StatusPanel width="w-[140px]">Y: 66.8</StatusPanel>
            <StatusPanel width="w-[140px]">Z: 0.0</StatusPanel>
            <StatusPanel width="w-[110px]" />
            <StatusPanel width="w-[110px]" />
            <StatusPanel width="w-12" />
          </div>
          <svg viewBox="0 0 38 32" className="w-[38px] h-8" aria-hidden="true">
            <path d="M13 32L38 6M21 32L38 14M29 32l9-10" stroke="#808080" strokeWidth="3" />
          </svg>
        </footer>
      </div>
    </div>
  );
}

export default App;
